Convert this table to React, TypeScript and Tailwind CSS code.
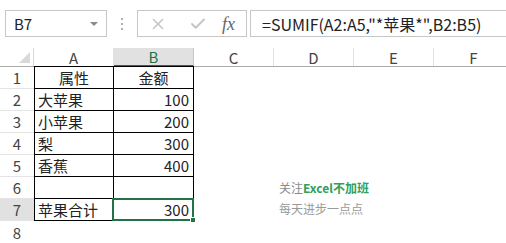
import { Check, X } from "lucide-react";

const cols = ["A", "B", "C", "D", "E", "F"];

const rows: { a: string; b: string; center?: boolean }[] = [
  { a: "属性", b: "金额", center: true },
  { a: "大苹果", b: "100" },
  { a: "小苹果", b: "200" },
  { a: "梨", b: "300" },
  { a: "香蕉", b: "400" },
  { a: "", b: "" },
  { a: "苹果合计", b: "300" },
];

const font = { fontFamily: '"Noto Sans CJK SC", "Liberation Sans", sans-serif' };

export default function App() {
  return (
    <div className="w-[506px] h-[243px] overflow-hidden bg-white text-[#222]" style={font}>
      {/* name box + formula bar */}
      <div className="h-[48px] flex items-start pt-[10px]">
        <div className="ml-[5px] w-[102px] h-[27px] border border-[#c6c6c6] flex items-center justify-between pl-[8px] pr-[8px]">
          <span className="text-[15px] leading-none">B7</span>
          <span className="w-0 h-0 border-l-[4px] border-r-[4px] border-t-[4px] border-l-transparent border-r-transparent border-t-[#8a8a8a]" />
        </div>
        <div className="w-[30px] h-[27px] flex flex-col items-center justify-center gap-[3px]">
          <span className="w-[2px] h-[2px] bg-[#b0b0b0]" />
          <span className="w-[2px] h-[2px] bg-[#b0b0b0]" />
          <span className="w-[2px] h-[2px] bg-[#b0b0b0]" />
        </div>
        <div className="w-[110px] h-[27px] border border-[#c6c6c6] flex items-center">
          <X className="ml-[11px] w-[18px] h-[18px] text-[#c4c4c4]" strokeWidth={2} />
          <Check className="ml-[22px] w-[18px] h-[18px] text-[#c4c4c4]" strokeWidth={2.5} />
          <span
            className="ml-[15px] text-[18px] italic text-[#666] leading-none"
            style={{ fontFamily: '"Liberation Serif", serif' }}
          >
            fx
          </span>
        </div>
        <div className="ml-[3px] flex-1 h-[27px] border-t border-b border-l border-[#c6c6c6] flex items-center pl-[11px]">
          <span className="text-[16px] leading-none text-[#222] whitespace-nowrap">=SUMIF(A2:A5,"*苹果*",B2:B5)</span>
        </div>
      </div>

      {/* column headers */}
      <div className="flex h-[19px] border-b border-[#ababab]">
        <div className="w-[34px] shrink-0 border-r border-[#d8d8d8] flex items-end justify-end pr-[3px] pb-[3px]">
          <svg width="11" height="11" viewBox="0 0 11 11">
            <polygon points="11,0 11,11 0,11" fill="#d9d9d9" />
          </svg>
        </div>
        {cols.map((c) => (
          <div
            key={c}
            className={`w-[80px] shrink-0 flex items-center justify-center text-[15px] leading-none border-r ${
              c === "B"
                ? "bg-[#e1e1e1] text-[#217346] border-[#c6c6c6] border-b-2 border-b-[#217346] -mb-[1px]"
                : "text-[#444] border-[#e0e0e0]"
            }`}
          >
            {c}
          </div>
        ))}
      </div>

      {/* data rows */}
      {rows.map((r, i) => {
        const n = i + 1;
        const active = n === 7;
        return (
          <div key={n} className="flex h-[22px]">
            <div
              className={`w-[34px] shrink-0 flex items-center justify-center text-[15px] leading-none text-[#444] border-b border-[#e4e4e4] ${
                active ? "bg-[#e1e1e1]" : ""
              }`}
            >
              {n}
            </div>
            <div
              className={`w-[80px] shrink-0 flex items-center border-l border-r border-b border-black text-[15px] leading-none ${
                n === 1 ? "border-t -mt-[1px] h-[23px] justify-center" : "pl-[3px]"
              }`}
            >
              {r.a}
            </div>
            <div
              className={`relative w-[80px] shrink-0 flex items-center border-r border-b border-black text-[15px] leading-none ${
                n === 1 ? "border-t -mt-[1px] h-[23px] justify-center" : "justify-end pr-[4px]"
              }`}
            >
              {r.b}
              {active && (
                <>
                  <span className="absolute -left-[2px] -top-[1px] -right-[1px] -bottom-[1px] border-2 border-[#217346]" />
                  <span className="absolute -right-[3px] -bottom-[3px] w-[6px] h-[6px] bg-[#217346] border border-white" />
                </>
              )}
            </div>
            {n === 6 && (
              <div className="ml-[85px] mt-[5px] text-[12px] whitespace-nowrap leading-none text-[#8a8a8a]">
                关注<span className="font-bold text-[#2ea05a]">Excel不加班</span>
              </div>
            )}
            {n === 7 && (
              <div className="ml-[85px] mt-[4px] text-[12px] whitespace-nowrap leading-none text-[#9a9a9a]">
                每天进步一点点
              </div>
            )}
          </div>
        );
      })}
      <div className="flex h-[22px]">
        <div className="w-[34px] shrink-0 flex items-center justify-center text-[15px] leading-none text-[#444]">8</div>
      </div>
    </div>
  );
}
